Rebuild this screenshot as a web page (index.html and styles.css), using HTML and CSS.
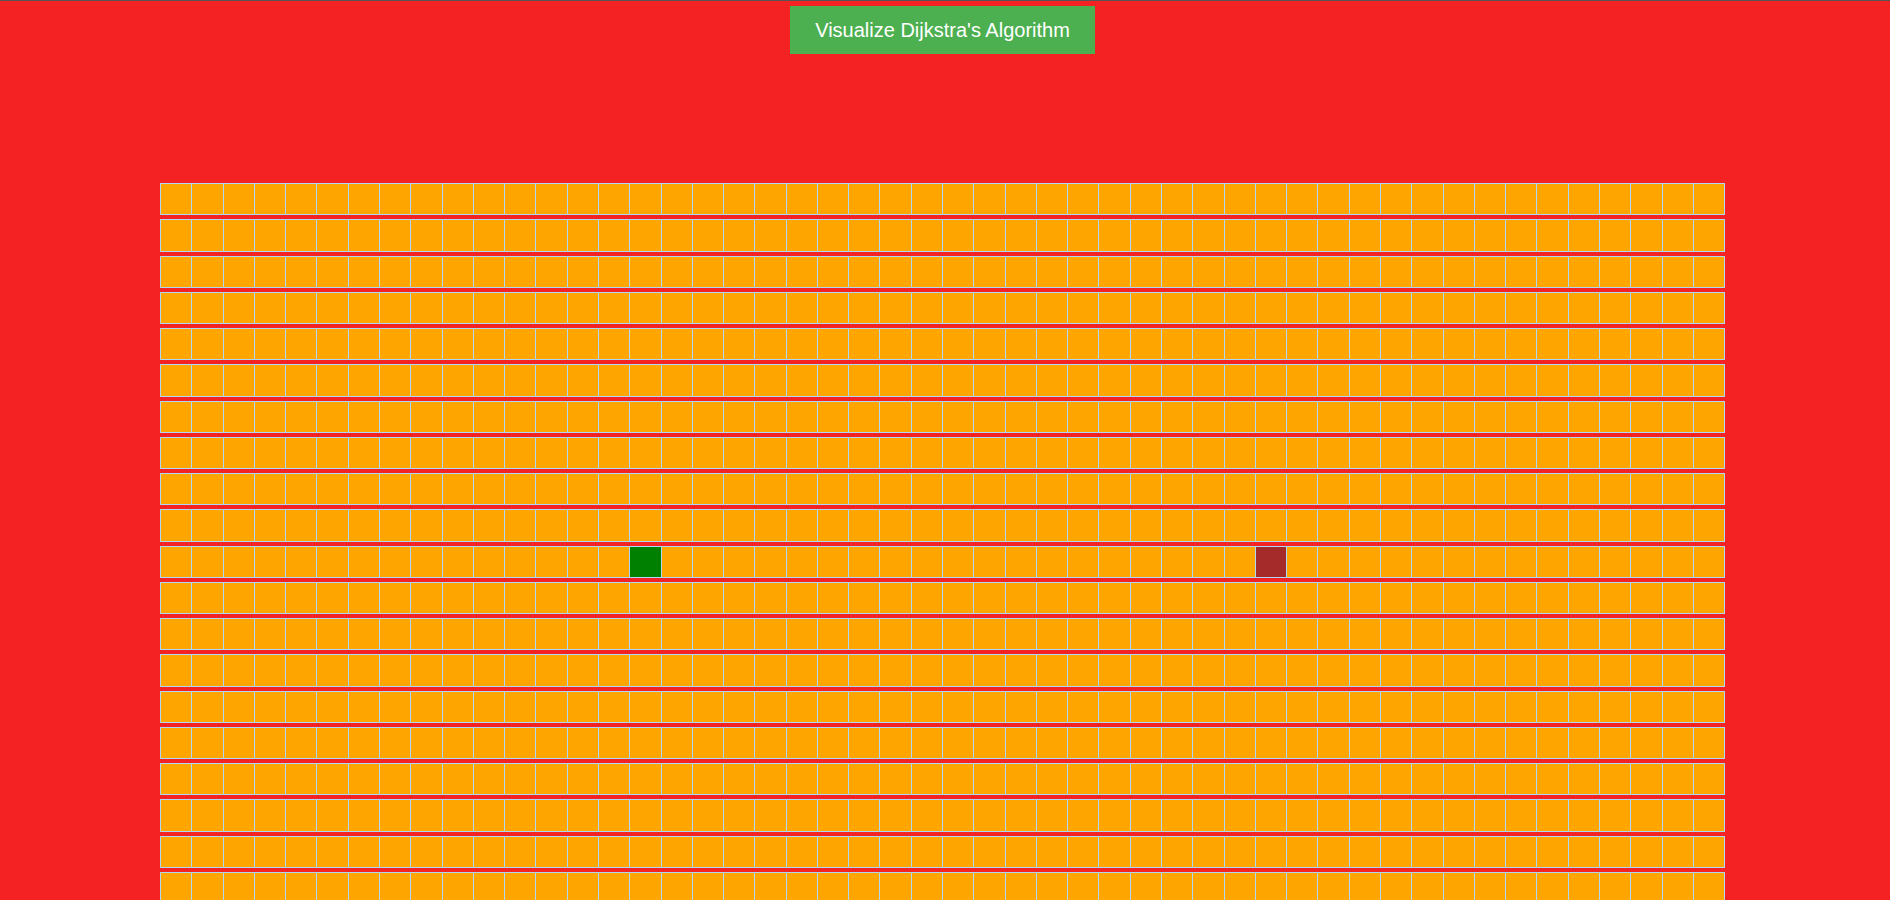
FILE: index.html
```html
<!DOCTYPE html>
<html lang="en">
<head>
<meta charset="utf-8">
<title>Pathfinding Visualizer</title>
<link rel="stylesheet" href="styles.css">
</head>
<body>
<div class="app">
  <button class="visualize-btn" type="button">Visualize Dijkstra's Algorithm</button>
  <div class="grid" id="grid"></div>
</div>
<script src="grid.js"></script>
</body>
</html>
```

FILE: styles.css
```css
html, body {
  margin: 0;
  padding: 0;
  background: #f42222;
}

body {
  border-top: 1px solid #555555;
  font-family: "Liberation Sans", Arial, sans-serif;
}

.app {
  width: 1885px;
  display: flex;
  flex-direction: column;
  align-items: center;
}

.visualize-btn {
  margin-top: 5px;
  width: 305px;
  height: 48px;
  padding: 0;
  border: none;
  background: #4caf50;
  color: #ffffff;
  font-family: "Liberation Sans", Arial, sans-serif;
  font-size: 20px;
  cursor: pointer;
}

.grid {
  margin-top: 129px;
  width: 1565px;
  display: flex;
  flex-direction: column;
  gap: 4px;
}

.row {
  display: flex;
  border-left: 1px solid rgb(175, 216, 248);
}

.node {
  flex: 1 1 0;
  height: 30.25px;
  background: #ffa500;
  border: 1px solid rgb(175, 216, 248);
  border-left: none;
}

.node-start {
  background: #008000;
}

.node-finish {
  background: #a52a2a;
}
```

FILE: grid.js
```js
(function () {
  var ROWS = 20;
  var COLS = 50;
  var START = { row: 10, col: 15 };
  var FINISH = { row: 10, col: 35 };
  var grid = document.getElementById('grid');
  for (var r = 0; r < ROWS; r++) {
    var row = document.createElement('div');
    row.className = 'row';
    for (var c = 0; c < COLS; c++) {
      var node = document.createElement('div');
      node.className = 'node';
      if (r === START.row && c === START.col) node.className += ' node-start';
      if (r === FINISH.row && c === FINISH.col) node.className += ' node-finish';
      row.appendChild(node);
    }
    grid.appendChild(row);
  }
})();
```
